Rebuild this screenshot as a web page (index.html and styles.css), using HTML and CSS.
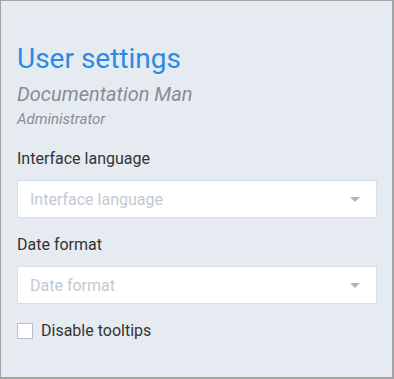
FILE: index.html
```html
<!DOCTYPE html>
<html lang="en">
<head>
  <meta charset="UTF-8" />
  <meta name="viewport" content="width=device-width, initial-scale=1.0"/>
  <title>User settings</title>
  <link rel="stylesheet" href="styles.css">
</head>
<body>
  <div class="settings-panel">
    <h1>User settings</h1>
    <div class="user-name">Documentation Man</div>
    <div class="user-role">Administrator</div>

    <div class="field">
      <label class="field-label">Interface language</label>
      <div class="select-box">
        <span class="placeholder">Interface language</span>
        <span class="caret"></span>
      </div>
    </div>

    <div class="field">
      <label class="field-label">Date format</label>
      <div class="select-box">
        <span class="placeholder">Date format</span>
        <span class="caret"></span>
      </div>
    </div>

    <label class="check-row">
      <span class="check-box"></span>
      <span>Disable tooltips</span>
    </label>
  </div>
</body>
</html>
```

FILE: styles.css
```css
html, body {
  margin: 0;
  padding: 0;
}

body {
  font-family: Roboto, "Liberation Sans", sans-serif;
  background-color: #e6ebf2;
}

.settings-panel {
  box-sizing: border-box;
  width: 394px;
  height: 379px;
  padding: 40px 15px 0 16px;
  background-color: #e6ebf2;
  border: 1px solid #a3a3a3;
  border-right-width: 2px;
  border-bottom-width: 2px;
}

h1 {
  margin: 0;
  font-size: 28px;
  font-weight: 400;
  line-height: 36px;
  color: #2b8ae6;
}

.user-name {
  margin-top: 5px;
  font-size: 20px;
  font-style: italic;
  line-height: 24px;
  color: #888d94;
}

.user-role {
  margin-top: 4px;
  font-size: 15px;
  font-style: italic;
  line-height: 18px;
  color: #888d94;
}

.field {
  margin-top: 21px;
}

.field + .field {
  margin-top: 17px;
}

.field-label {
  display: block;
  font-size: 16px;
  line-height: 19px;
  color: #333;
}

.select-box {
  display: flex;
  align-items: center;
  justify-content: space-between;
  height: 36px;
  margin-top: 12px;
  padding: 0 16px 0 12px;
  background-color: #fff;
  border: 1px solid #d7dee7;
}

.placeholder {
  font-size: 16px;
  color: #c3c9d3;
}

.caret {
  width: 0;
  height: 0;
  border-left: 5px solid transparent;
  border-right: 5px solid transparent;
  border-top: 5px solid #aeb6c2;
}

.check-row {
  display: flex;
  align-items: center;
  gap: 8px;
  margin-top: 17px;
  font-size: 16px;
  line-height: 19px;
  color: #333;
}

.check-box {
  box-sizing: border-box;
  width: 16px;
  height: 16px;
  background-color: #fff;
  border: 1px solid #b8c0cb;
}
```
